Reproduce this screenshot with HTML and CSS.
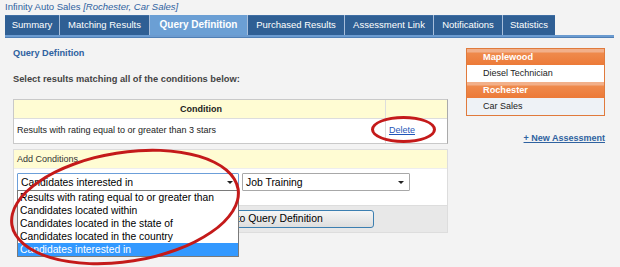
FILE: index.html
```html
<!DOCTYPE html>
<html>
<head>
<meta charset="utf-8">
<link rel="stylesheet" href="styles.css">
</head>
<body>
<div class="page">
  <div class="title">Infinity Auto Sales <em>[Rochester, Car Sales]</em></div>
  <div class="tabs">
    <div class="tab t-summary">Summary</div>
    <div class="tab t-matching">Matching Results</div>
    <div class="tab t-query active">Query Definition</div>
    <div class="tab t-purchased">Purchased Results</div>
    <div class="tab t-assess">Assessment Link</div>
    <div class="tab t-notif">Notifications</div>
    <div class="tab t-stats">Statistics</div>
  </div>
  <div class="tabline"></div>
  <div class="main">
    <div class="left">
      <h2 class="heading">Query Definition</h2>
      <p class="intro">Select results matching all of the conditions below:</p>
      <div class="cond-table">
        <div class="cond-head">
          <div class="c1">Condition</div>
          <div class="c2"></div>
        </div>
        <div class="cond-row">
          <div class="c1">Results with rating equal to or greater than 3 stars</div>
          <div class="c2"><a class="link">Delete</a></div>
        </div>
        <div class="ring ring-small"></div>
      </div>
      <div class="add-box">
        <div class="add-head">Add Conditions</div>
        <div class="add-body">
          <div class="select sel1"><span>Candidates interested in</span><i class="arrow"></i></div>
          <div class="select sel2"><span>Job Training</span><i class="arrow"></i></div>
        </div>
        <div class="add-foot">
          <div class="btn">Add to Query Definition</div>
        </div>
        <ul class="dropdown">
          <li>Results with rating equal to or greater than</li>
          <li>Candidates located within</li>
          <li>Candidates located in the state of</li>
          <li>Candidates located in the country</li>
          <li class="sel">Candidates interested in</li>
        </ul>
        <div class="ring ring-big"></div>
      </div>
    </div>
    <div class="right">
      <div class="loc-box">
        <div class="loc-head">Maplewood</div>
        <div class="loc-item">Diesel Technician</div>
        <div class="loc-head">Rochester</div>
        <div class="loc-item current">Car Sales</div>
      </div>
      <a class="new-link">+ New Assessment</a>
    </div>
  </div>
</div>
</body>
</html>
```

FILE: styles.css
```css
html, body {
  margin: 0;
  padding: 0;
  background: #f3f3f3;
  font-family: "Liberation Sans", Arial, sans-serif;
  font-size: 9px;
  color: #333;
}
body {
  min-height: 267px;
}
.page {
  padding: 1px 6px 0 5px;
  width: 609px;
  min-height: 266px;
}
.title {
  height: 14px;
  line-height: 12px;
  color: #2f62a0;
  font-size: 9.5px;
}
.title em {
  font-style: italic;
}
.tabs {
  display: inline-flex;
  gap: 1px;
  height: 20px;
  background: #a7bedb;
  vertical-align: top;
}
.tab {
  background: #2f5f94;
  color: #fff;
  height: 20px;
  line-height: 20px;
  font-size: 9.5px;
  text-align: center;
  box-shadow: inset 0 1px 0 #3f6ea3;
}
.t-summary { width: 54px; }
.t-matching { width: 89px; }
.t-query { width: 97px; }
.t-purchased { width: 96px; }
.t-assess { width: 88px; }
.t-notif { width: 68px; }
.t-stats { width: 52px; }
.tab.active {
  background: #6b9fd4;
  font-weight: bold;
  font-size: 10px;
  box-shadow: none;
}
.tabline {
  height: 3px;
  background: #6b9bd0;
  border-bottom: 1px solid #4f7fb5;
  box-sizing: border-box;
  width: 609px;
}
.main {
  display: flex;
  padding-left: 8px;
}
.left {
  width: 435px;
}
.heading {
  margin: 0;
  padding-top: 8px;
  height: 14px;
  line-height: 14px;
  font-size: 9.2px;
  font-weight: bold;
  color: #2f62a0;
}
.intro {
  margin: 12px 0 0;
  height: 14px;
  line-height: 14px;
  font-size: 9.3px;
  font-weight: bold;
  color: #444;
}
.cond-table {
  position: relative;
  margin-top: 13px;
  border: 1px solid #c9c9c9;
  border-right-color: #aaa;
  background: #fff;
}
.cond-head, .cond-row {
  display: flex;
}
.cond-head {
  height: 18px;
  line-height: 18px;
  background: #fffcd3;
  font-weight: bold;
  color: #222;
  border-bottom: 1px solid #ddd;
}
.cond-row {
  height: 24px;
  line-height: 22px;
  color: #222;
}
.c1 {
  width: 372px;
  border-right: 1px solid #ddd;
  padding-left: 3px;
  box-sizing: border-box;
}
.cond-head .c1 {
  text-align: center;
}
.c2 {
  flex: 1;
  padding-left: 3px;
}
.link {
  color: #1f55b8;
  text-decoration: underline;
}
.ring {
  position: absolute;
  border: 3px solid #c41a1a;
  border-radius: 50%;
  box-sizing: border-box;
  pointer-events: none;
}
.ring-small {
  left: 357px;
  top: 16px;
  width: 65px;
  height: 27px;
}
.add-box {
  position: relative;
  margin-top: 5px;
  border: 1px solid #ddd;
  background: #fff;
}
.add-head {
  height: 18px;
  line-height: 18px;
  background: #fffcd3;
  padding-left: 3px;
  color: #333;
  border-bottom: 1px solid #eee;
}
.add-body {
  display: flex;
  gap: 3px;
  padding: 4px 3px 0;
  height: 36px;
  box-sizing: border-box;
}
.select {
  position: relative;
  height: 18px;
  line-height: 17px;
  border: 1px solid #a8a8a8;
  border-radius: 1px;
  box-sizing: border-box;
  background: #fff;
  font-size: 10.4px;
  color: #000;
  padding-left: 3px;
}
.sel1 { width: 222px; border-color: #6c9fd9; }
.sel2 { width: 168px; }
.arrow {
  position: absolute;
  right: 5px;
  top: 7px;
  width: 0;
  height: 0;
  border-left: 3px solid transparent;
  border-right: 3px solid transparent;
  border-top: 3px solid #222;
}
.add-foot {
  height: 27px;
  background: #e8e8e8;
  border-top: 1px solid #ddd;
  padding-top: 4px;
  box-sizing: border-box;
}
.btn {
  margin-left: 150px;
  width: 210px;
  height: 18px;
  line-height: 16px;
  box-sizing: border-box;
  border: 1px solid #3c7fb1;
  border-radius: 3px;
  background: linear-gradient(#f6f6f6, #dedede);
  font-size: 10.4px;
  color: #000;
  text-align: center;
}
.dropdown {
  position: absolute;
  left: 3px;
  top: 40px;
  width: 222px;
  margin: 0;
  padding: 0;
  list-style: none;
  background: #fff;
  border: 1px solid #7a7a7a;
  box-sizing: border-box;
  font-size: 10.3px;
  color: #000;
}
.dropdown li {
  height: 13px;
  line-height: 13px;
  padding-left: 2px;
  white-space: nowrap;
}
.dropdown li.sel {
  background: #3399ff;
  color: #fff;
}
.ring-big {
  left: -5px;
  top: 1px;
  width: 232px;
  height: 112px;
  transform: rotate(-9deg);
}
.right {
  margin-left: 18px;
  width: 139px;
  padding-top: 10px;
}
.loc-box {
  border: 1px solid #e07a3c;
  background: #fff;
}
.loc-head {
  height: 16px;
  line-height: 16px;
  padding-left: 16px;
  color: #fff;
  font-weight: bold;
  font-size: 9.2px;
  background: linear-gradient(#f2b08a 0, #f2b08a 3px, #ef8a4c 4px, #ec7a38 100%);
}
.loc-item {
  height: 17px;
  line-height: 17px;
  padding-left: 16px;
  color: #222;
}
.loc-item.current {
  background: #eef2f6;
}
.new-link {
  display: block;
  margin-top: 17px;
  text-align: right;
  color: #2f62a0;
  font-weight: bold;
  text-decoration: underline;
}
```
